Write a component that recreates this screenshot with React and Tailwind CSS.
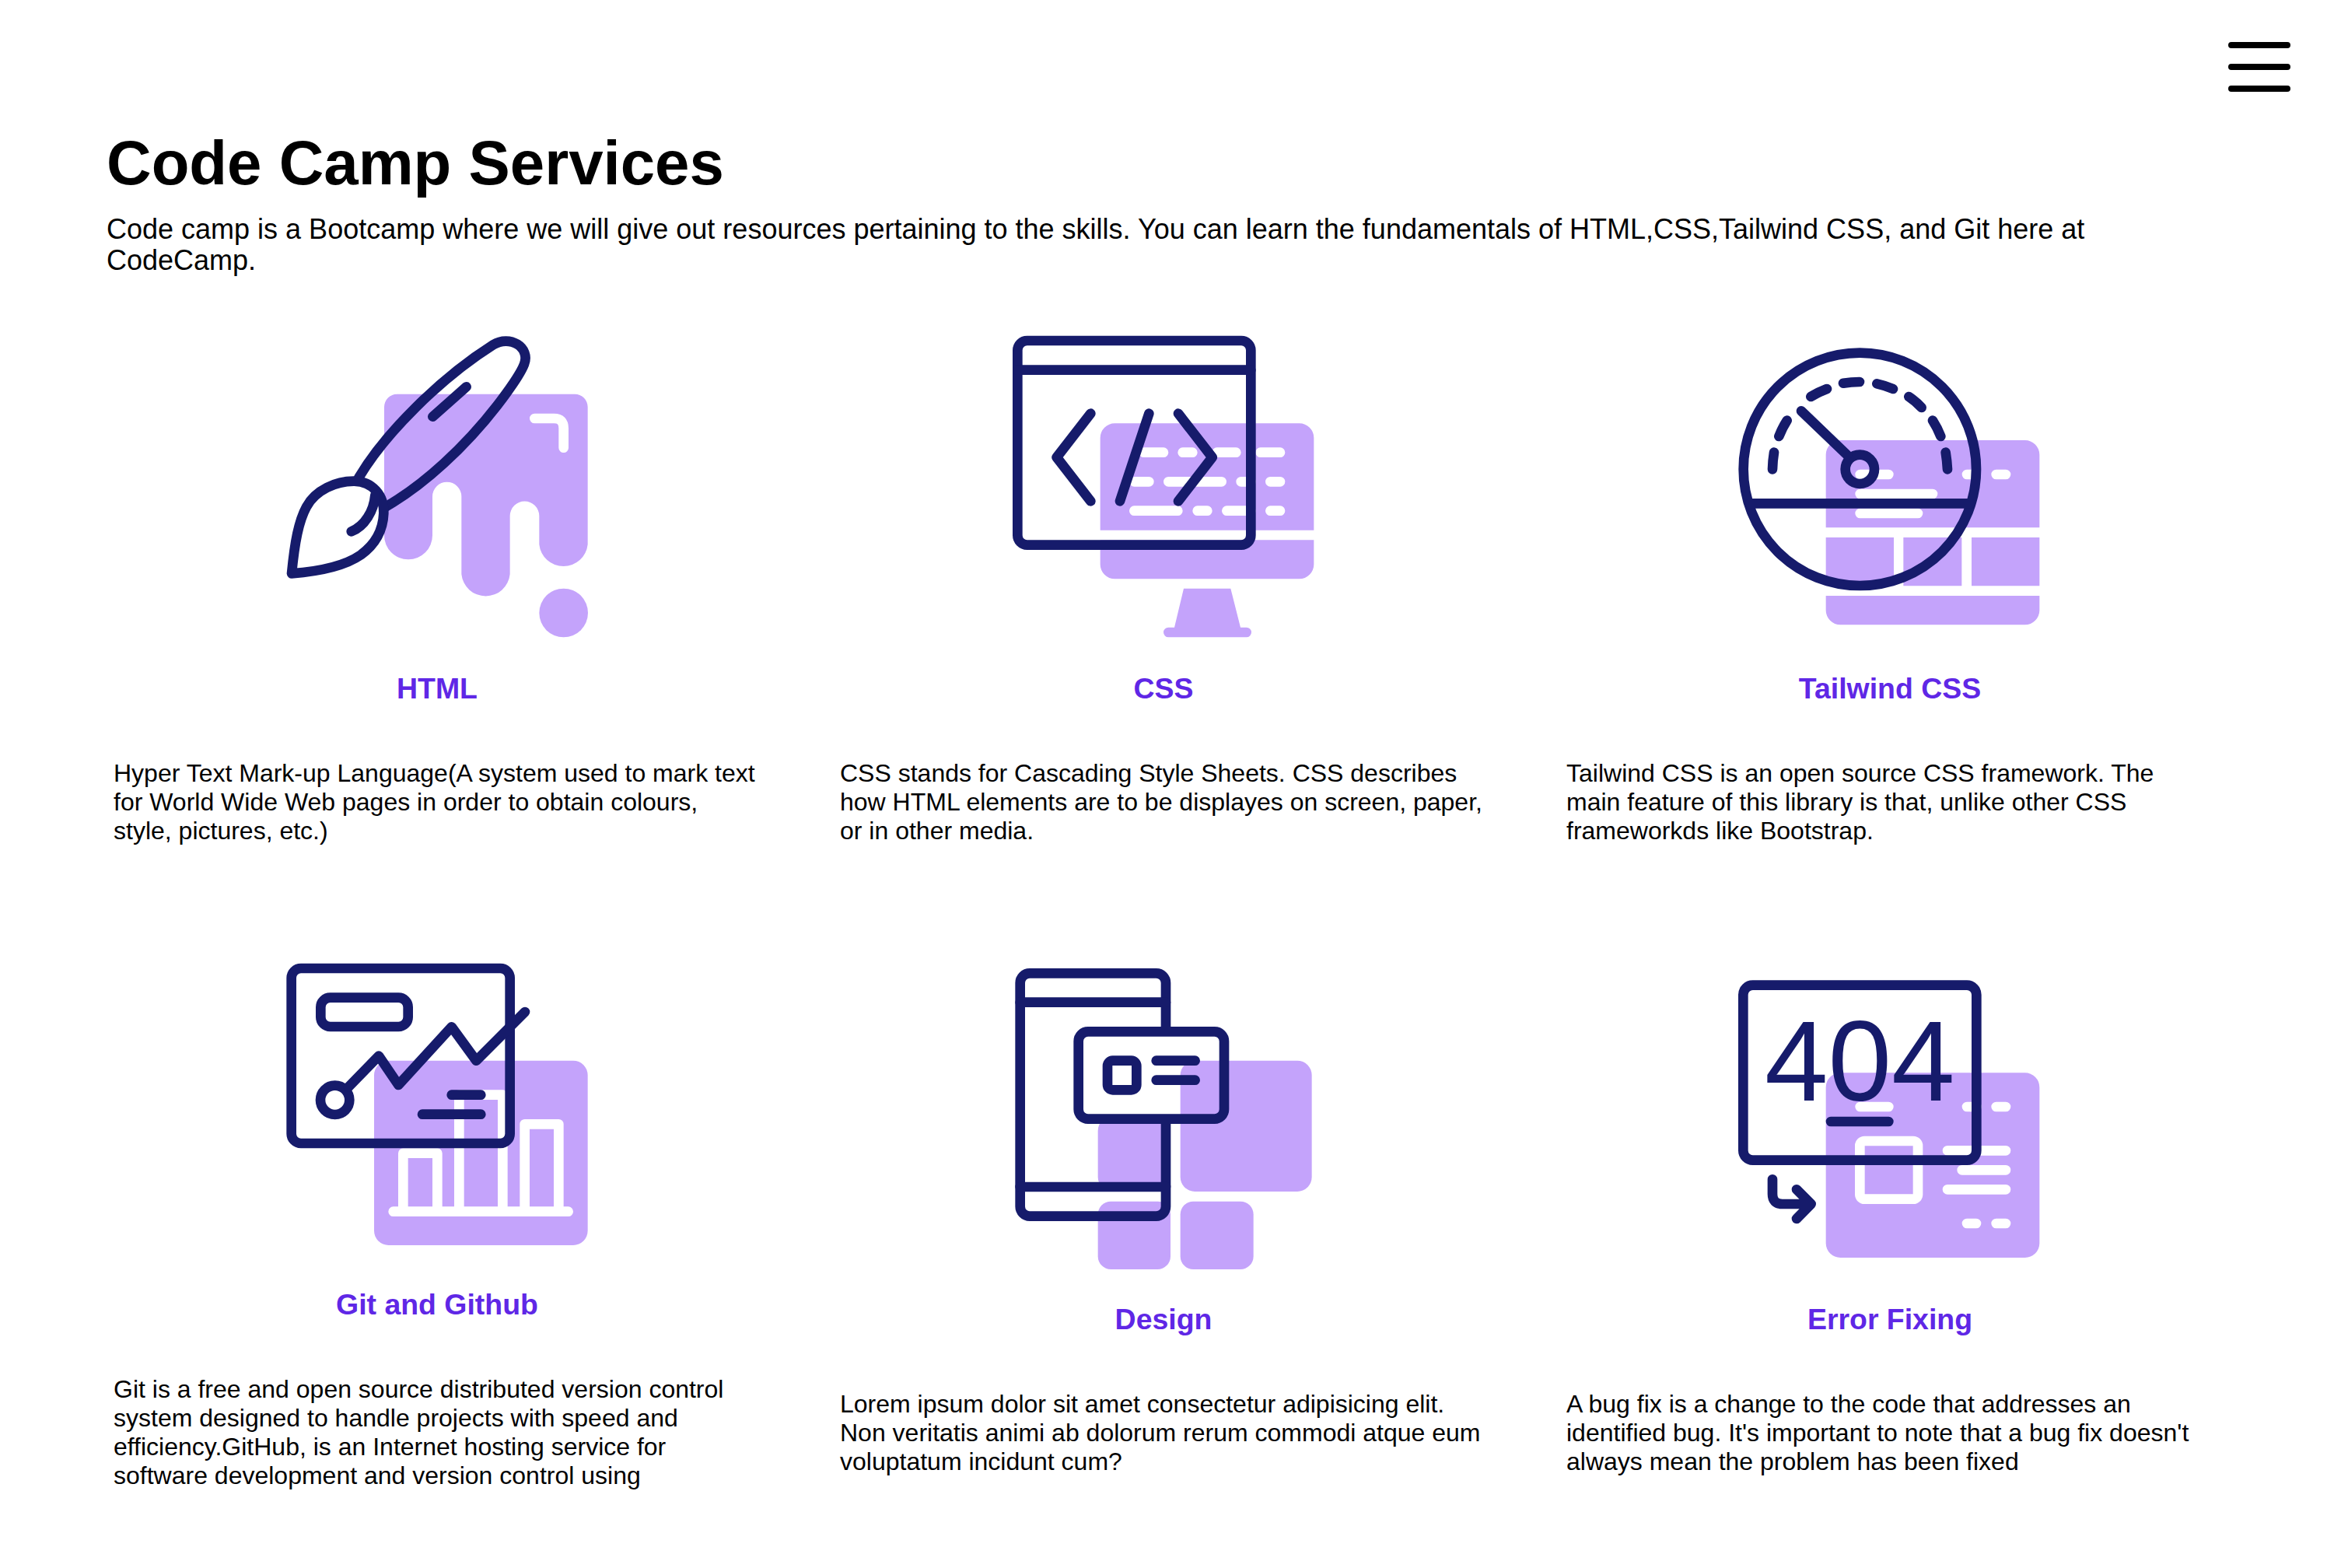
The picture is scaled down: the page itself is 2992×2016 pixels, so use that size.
const NAVY = "#161b6b";
const PURPLE = "#c4a3fb";

// icons were traced on a 3x grid, so every svg shows 1380x1290 units at 460x430
function Icon({ x, y, children }) {
  return (
    <svg
      viewBox={`${x} ${y} 1380 1290`}
      className="block h-[430px] w-[460px] shrink-0"
      fill="none"
      strokeLinecap="round"
      strokeLinejoin="round"
      strokeWidth="38"
    >
      {children}
    </svg>
  );
}

function BrushIcon() {
  return (
    <Icon x={-21} y={-15}>
      <path
        fill={PURPLE}
        d="M465 340 A50 50 0 0 1 515 290 H1200 A50 50 0 0 1 1250 340 V870 A94 94 0 0 1 1063 870 V760 A56 56 0 0 0 950 760 V985 A94 94 0 0 1 763 985 V685 A56 56 0 0 0 651 685 V835 A93 93 0 0 1 465 835 Z"
      />
      <circle cx="1157" cy="1134" r="94" fill={PURPLE} />
      <path stroke="#fff" d="M1045 384 H1120 Q1157 384 1157 422 V497" />
      <g stroke={NAVY}>
        <path d="M367 612 C470 440 680 230 885 100 C950 60 1030 110 1005 175 C990 215 950 270 900 335 C780 490 620 640 470 725" />
        <path d="M652 377 L782 262" />
        <path d="M108 982 C120 860 135 780 165 725 C200 660 280 625 350 626 C420 628 465 680 463 750 C460 820 430 870 375 910 C310 955 200 975 108 982 Z" />
        <path d="M430 680 C425 740 390 800 338 820" />
      </g>
    </Icon>
  );
}

function CodeIcon() {
  return (
    <Icon x={-42} y={-15}>
      <path
        fill={PURPLE}
        d="M404 815 V459 A56 56 0 0 1 460 403 H1172 A56 56 0 0 1 1228 459 V815 Z M404 853 H1228 V947 A56 56 0 0 1 1172 1003 H460 A56 56 0 0 1 404 947 Z M726 1040 H907 L945 1190 H968 A19 19 0 0 1 968 1228 H667 A19 19 0 0 1 667 1190 H690 Z"
      />
      <path
        stroke="#fff"
        d="M572 515 H648 M722 515 H760 M854 515 H928 M1022 515 H1098 M535 628 H592 M667 628 H872 M947 628 H985 M1060 628 H1098 M535 740 H703 M779 740 H817 M892 740 H985 M1060 740 H1098"
      />
      <g stroke={NAVY}>
        <rect x="85" y="84" width="900" height="788" rx="37" />
        <path d="M85 197 H985 M367 365 L236 534 L367 703 M592 365 L480 703 M705 365 L836 534 L705 703" />
      </g>
    </Icon>
  );
}

function GaugeIcon() {
  return (
    <Icon x={-30} y={-45}>
      <path
        fill={PURPLE}
        d="M413 775 V494 A56 56 0 0 1 469 438 H1181 A56 56 0 0 1 1237 494 V775 Z M413 813 H675 V1000 H413 Z M712 813 H937 V1000 H712 Z M975 813 H1237 V1000 H975 Z M413 1038 H1237 V1094 A56 56 0 0 1 1181 1150 H469 A56 56 0 0 1 413 1094 Z"
      />
      <path stroke="#fff" d="M545 570 H655 M957 570 H990 M1070 570 H1107 M545 645 H825 M545 720 H768" />
      <g stroke={NAVY}>
        <circle cx="544" cy="550" r="449" />
        <circle cx="544" cy="550" r="56" />
        <path d="M120 682 H970 M318 325 L495 495" />
        <path d="M207 550 Q208 515 213 485 M232 423 Q245 390 263 362 M355 270 Q385 252 417 240 M480 218 Q510 213 543 213 M610 220 Q642 227 672 240 M733 270 Q760 288 782 312 M825 362 Q843 390 856 423 M875 485 Q880 515 882 550" />
      </g>
    </Icon>
  );
}

function ChartIcon() {
  return (
    <Icon x={-21} y={-72}>
      <rect x="426" y="428" width="824" height="712" rx="56" fill={PURPLE} />
      <path
        stroke="#fff"
        d="M500 1010 H1175 M538 1010 V785 H670 V1010 M754 1010 V560 H922 V1010 M1007 1010 V673 H1138 V1010"
      />
      <g stroke={NAVY}>
        <rect x="107" y="72" width="843" height="675" rx="37" />
        <rect x="220" y="185" width="337" height="112" rx="37" />
        <circle cx="275" cy="580" r="56" />
        <path d="M327 530 L444 410 L520 522 L725 298 L820 428 L1008 240 M725 560 H838 M612 635 H838" />
      </g>
    </Icon>
  );
}

function PhoneIcon() {
  return (
    <Icon x={-42} y={-48}>
      <g fill={PURPLE}>
        <rect x="713" y="395" width="507" height="505" rx="56" />
        <rect x="395" y="610" width="280" height="290" rx="56" />
        <rect x="395" y="938" width="280" height="262" rx="50" />
        <rect x="713" y="938" width="282" height="262" rx="50" />
      </g>
      <g stroke={NAVY}>
        <path d="M657 265 V95 A37 37 0 0 0 620 58 H132 A37 37 0 0 0 95 95 V958 A37 37 0 0 0 132 995 H620 A37 37 0 0 0 657 958 V638" />
        <path d="M95 170 H657 M95 882 H657" />
        <rect x="320" y="283" width="562" height="337" rx="37" />
        <rect x="432" y="395" width="112" height="113" rx="20" />
        <path d="M620 395 H770 M620 470 H770" />
      </g>
    </Icon>
  );
}

function ErrorIcon() {
  return (
    <Icon x={-30} y={-78}>
      <rect x="413" y="412" width="824" height="713" rx="56" fill={PURPLE} />
      <g stroke="#fff">
        <path d="M545 543 H655 M957 543 H995 M1070 543 H1107 M882 712 H1107 M938 787 H1107 M882 862 H1107 M957 993 H993 M1070 993 H1107" />
        <rect x="544" y="675" width="224" height="224" rx="18" />
      </g>
      <text
        x="544"
        y="520"
        fill={NAVY}
        textAnchor="middle"
        fontSize="440"
        fontFamily="'Liberation Sans', Arial, sans-serif"
      >
        404
      </text>
      <g stroke={NAVY}>
        <rect x="94" y="74" width="900" height="675" rx="37" />
        <path d="M432 600 H655 M207 823 V880 Q207 918 245 918 H355 M300 862 L356 918 L300 975" />
      </g>
    </Icon>
  );
}

function Service({ icon, title, children }) {
  return (
    <div className="flex flex-col items-center">
      {icon}
      <h3 className="mt-[28px] text-center text-[37.44px] leading-[44px] font-bold text-[#5f27e6]">{title}</h3>
      <p className="mt-[69px] w-full pr-[54px] pl-[51px] text-[32px] leading-[37px] text-black">{children}</p>
    </div>
  );
}

export default function App() {
  return (
    <div className="min-h-screen bg-white font-['Liberation_Sans',Arial,sans-serif] text-black">
      <header className="flex justify-end pt-[54px] pr-[47px]">
        <svg viewBox="0 0 80 64" className="h-[64px] w-[80px]" stroke="#000" strokeWidth="8" strokeLinecap="round">
          <path d="M4 4 H76 M4 32 H76 M4 60 H76" />
        </svg>
      </header>
      <main className="px-[95px]">
        <div className="px-[42px]">
          <h1 className="mt-[46px] text-[79.8px] leading-[92px] font-bold">Code Camp Services</h1>
          <p className="mt-[19px] text-[36px] leading-[40px]">
            Code camp is a Bootcamp where we will give out resources pertaining to the skills. You can learn the
            fundamentals of HTML,CSS,Tailwind CSS, and Git here at CodeCamp.
          </p>
        </div>
        <section className="mt-[50px] grid grid-cols-3 items-center">
          <Service icon={<BrushIcon />} title="HTML">
            Hyper Text Mark-up Language(A system used to mark text for World Wide Web pages in order to obtain colours,
            style, pictures, etc.)
          </Service>
          <Service icon={<CodeIcon />} title="CSS">
            CSS stands for Cascading Style Sheets. CSS describes how HTML elements are to be displayes on screen, paper,
            or in other media.
          </Service>
          <Service icon={<GaugeIcon />} title="Tailwind CSS">
            Tailwind CSS is an open source CSS framework. The main feature of this library is that, unlike other CSS
            frameworkds like Bootstrap.
          </Service>
        </section>
        <section className="mt-[110px] grid grid-cols-3 items-center">
          <Service icon={<ChartIcon />} title="Git and Github">
            Git is a free and open source distributed version control system designed to handle projects with speed and
            efficiency.GitHub, is an Internet hosting service for software development and version control using
          </Service>
          <Service icon={<PhoneIcon />} title="Design">
            Lorem ipsum dolor sit amet consectetur adipisicing elit. Non veritatis animi ab dolorum rerum commodi atque
            eum voluptatum incidunt cum?
          </Service>
          <Service icon={<ErrorIcon />} title="Error Fixing">
            A bug fix is a change to the code that addresses an identified bug. It's important to note that a bug fix
            doesn't always mean the problem has been fixed
          </Service>
        </section>
      </main>
    </div>
  );
}
